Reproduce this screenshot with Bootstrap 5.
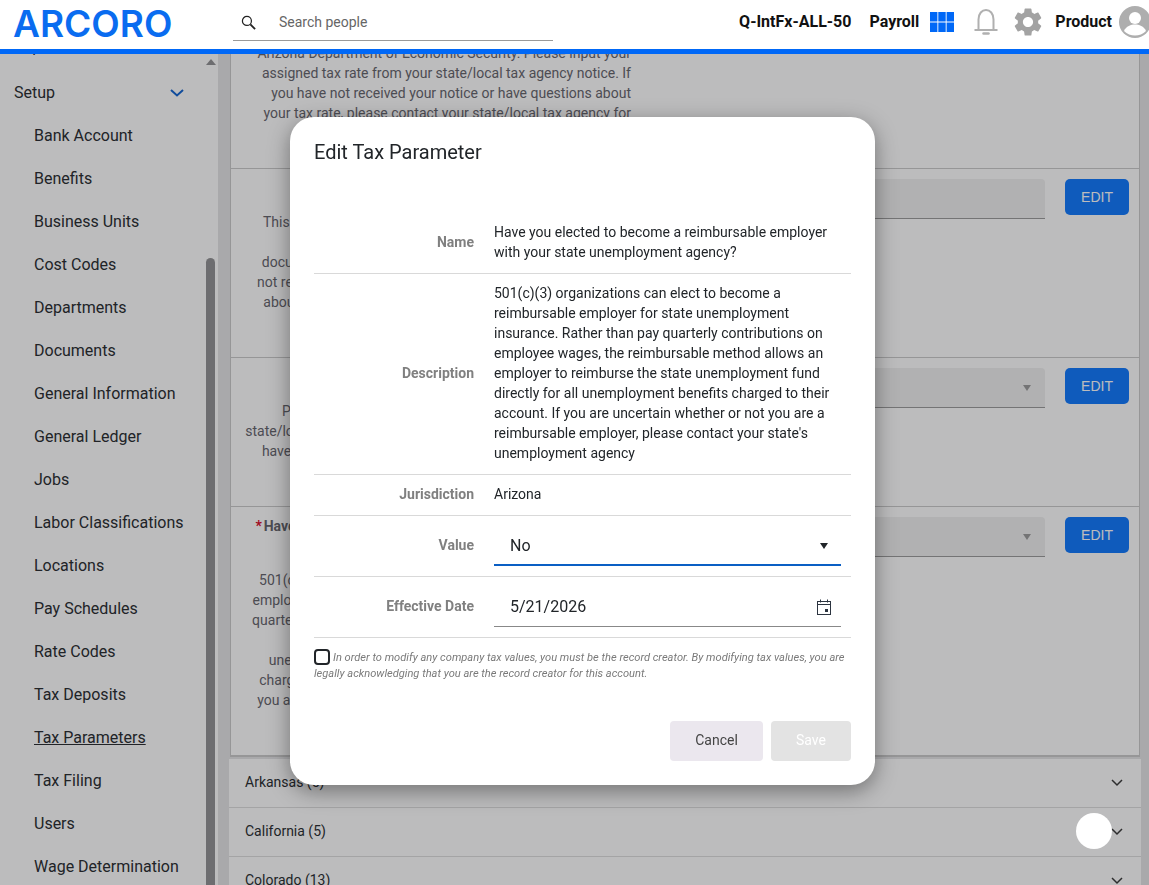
<!DOCTYPE html>
<html lang="en">
<head>
    <meta charset="UTF-8">
    <meta name="viewport" content="width=device-width, initial-scale=1.0">
    <title>Tax Parameters</title>
    <link href="https://cdn.jsdelivr.net/npm/bootstrap@5.3.0/dist/css/bootstrap.min.css" rel="stylesheet">
    <style>
        body { font-family: Roboto, "Liberation Sans", sans-serif; font-size: 14px; color: #212529; height: 100vh; overflow: hidden; background: #fff; }

        /* header */
        .top-bar { height: 54px; border-bottom: 5px solid #0068f7; background: #fff; position: relative; z-index: 1060; overflow: hidden; }
        .brand-text { font-family: Inter, sans-serif; font-size: 37px; font-weight: 600; letter-spacing: 0; color: #0a6cf0; line-height: 47px; width: 233px; padding-left: 13px; }
        .search-box { width: 320px; height: 40px; margin-top: 1px; border-bottom: 1px solid #9a9a9a; color: #666; padding: 3px 0 0 8px; gap: 23px; }
        .head-label { font-size: 16px; font-weight: 700; color: #111; line-height: 44px; }
        .tenant-label { margin-right: 18px; }
        .payroll-label { margin-right: 11px; }
        .grid-icon { margin-right: 20px; }
        .bell-icon { margin-right: 13px; }
        .gear-icon { margin-right: 10px; }
        .head-right { margin-left: auto; }
        .avatar-icon { margin: 0 -2px 0 7px; }

        /* sidebar */
        .page-wrap { height: 831px; overflow: hidden; }
        .side-nav { width: 200px; overflow: hidden; font-size: 16px; flex-shrink: 0; }
        .side-nav a { display: block; color: #212529; text-decoration: none; height: 43px; line-height: 43px; padding-left: 34px; white-space: nowrap; }
        .side-nav a.top-item { padding-left: 14px; }
        .side-nav a.clipped-item { height: 46px; }
        .side-nav a.current { text-decoration: underline; }
        .side-inner { margin-top: -29px; }
        .scroll-rail { width: 18px; flex-shrink: 0; padding: 5px 3px 0 6px; overflow: hidden; }
        .scroll-arrow { width: 0; height: 0; border-left: 5px solid transparent; border-right: 5px solid transparent; border-bottom: 6px solid #8f8f91; margin-bottom: 193px; }
        .scroll-thumb { width: 9px; height: 700px; background: #8f8f91; border-radius: 5px 5px 0 0; }

        /* background content */
        .main-area { background: #e4e4e6; flex-grow: 1; overflow: hidden; padding-left: 11px; padding-right: 8px; }
        .tax-card { background: #fff; margin: -55px 1px 2px 1px; border: 1px solid #c9c9c9; border-bottom-width: 2px; }
        .tax-row { border-bottom: 1px solid #c9c9c9; padding: 9px 10px 25px 0; }
        .tax-row:last-child { border-bottom: 0; }
        .tax-text { width: 400px; text-align: right; color: #5f6068; white-space: nowrap; line-height: 20px; flex-shrink: 0; }
        .tax-name { font-weight: 700; margin-bottom: 14px; }
        .req-star { color: #d8001c; margin-right: 2px; }
        .fake-input { background: #f0f0f0; border-bottom: 1px solid #999; height: 40px; margin: 1px 20px 0 20px; flex-grow: 1; border-radius: 4px 4px 0 0; padding-right: 14px; }
        .fake-caret { width: 0; height: 0; border-left: 4px solid transparent; border-right: 4px solid transparent; border-top: 6px solid #999; }
        .edit-btn { background: #0874fe; color: #fff; border: 0; width: 64px; height: 36px; font: 14px "Liberation Sans", sans-serif; flex-shrink: 0; margin-top: 1px; border-radius: 5px; }
        .state-row { background: #fff; height: 49px; border-bottom: 1px solid #ddd; padding: 0 18px 2px 16px; color: #212529; }
        .state-row svg { margin-top: 2px; }

        /* overlay */
        .dim-layer { position: fixed; inset: 54px 0 0 0; background: rgba(32, 32, 38, .3); z-index: 1050; }
        .tax-modal { z-index: 1055; }
        .tax-modal .modal-dialog { margin: 117px 0 0 290px; width: 585px; max-width: 585px; }
        .tax-modal .modal-content { border: 0; border-radius: 24px; box-shadow: 0 6px 22px rgba(0, 0, 0, .4); }
        .tax-modal .modal-header { border: 0; padding: 23px 24px 0; height: 96px; align-items: flex-start; }
        .tax-modal .modal-title { font-size: 20px; line-height: 24px; font-weight: 400; }
        .tax-modal .modal-body { padding: 0 24px; }
        .form-line { border-bottom: 1px solid #d9d9d9; display: flex; align-items: center; line-height: 20px; }
        .text-line { padding: 9px 0 11px; }
        .field-line { height: 61px; }
        .field-line .line-label { margin-bottom: 2px; }
        .line-label { width: 160px; margin-right: 20px; text-align: right; font-weight: 700; color: #808080; flex-shrink: 0; }
        .line-field { width: 347px; height: 40px; padding: 0 10px 0 16px; font-size: 16px; color: #212529; }
        .field-select { border-bottom: 2px solid #0a5fc4; height: 42px; margin-top: -2px; padding: 4px 13px 0 16px; }
        .field-date { border-bottom: 1px solid #888; }
        .ack-note { font-size: 11.1px; font-style: italic; color: #7a7a7a; line-height: 16px; margin-top: 10px; }
        .ack-box { appearance: none; width: 16px; height: 16px; margin: 1px 3px -3px 0; border: 2px solid #212529; border-radius: 4px; background: #fff; vertical-align: -1px; }
        .tax-modal .modal-footer { border: 0; padding: 39px 24px 24px; gap: 8px; }
        .tax-modal .modal-footer > * { margin: 0; }
        .cancel-btn, .save-btn { height: 40px; border: 0; border-radius: 4px; font-size: 14px; padding-bottom: 3px; }
        .cancel-btn { width: 93px; background: #ebe7ee; color: #444; }
        .save-btn { width: 80px; background: #e3e3e3; color: #fff; }
        .float-dot { position: fixed; left: 1076px; top: 813px; width: 36px; height: 36px; border-radius: 50%; background: #fff; z-index: 1056; }
    </style>
</head>
<body>
    <header class="top-bar d-flex align-items-start">
        <div class="brand-text">ARCORO</div>
        <div class="search-box d-flex align-items-center">
            <svg width="15" height="15" viewBox="0 0 16 16" fill="none" stroke="#222" stroke-width="1.3"><circle cx="6.3" cy="6.3" r="4.8"/><path d="M10 10l5 5" stroke-width="2"/></svg>
            <span>Search people</span>
        </div>
        <div class="head-right d-flex align-items-center">
            <span class="head-label tenant-label">Q-IntFx-ALL-50</span>
            <span class="head-label payroll-label">Payroll</span>
            <svg class="grid-icon" width="24" height="20" viewBox="0 0 24 20" fill="#0068f7" aria-label="apps"><rect width="7.4" height="9.5"/><rect x="8.3" width="7.4" height="9.5"/><rect x="16.6" width="7.4" height="9.5"/><rect y="10.500" width="7.4" height="9.5"/><rect x="8.3" y="10.500" width="7.4" height="9.5"/><rect x="16.6" y="10.500" width="7.4" height="9.5"/></svg>
            <svg class="bell-icon" width="24" height="28" viewBox="0 0 24 28" fill="none" stroke="#b0b0b0" stroke-width="2" aria-label="alerts"><path d="M.5 22h23M4.500 22V11.500C4.500 5.500 8 2 12 2s7.500 3.500 7.500 9.500V22"/><path d="M9.500 25.500h5" stroke-linecap="round" stroke-width="2.500"/></svg>
            <svg class="gear-icon" width="34" height="34" viewBox="0 0 24 24" fill="#a3a3a3" aria-label="settings"><path d="M19.140 12.940c.04-.3.06-.61.06-.94 0-.32-.02-.64-.07-.94l2.030-1.580c.18-.14.23-.41.12-.61l-1.920-3.320c-.12-.22-.37-.29-.59-.22l-2.390.96c-.5-.38-1.030-.7-1.620-.94l-.36-2.540c-.04-.24-.24-.41-.48-.41h-3.840c-.24 0-.43.17-.47.41l-.36 2.540c-.59.24-1.130.57-1.620.94l-2.390-.96c-.22-.08-.47 0-.59.22L2.740 8.870c-.12.21-.08.47.12.61l2.030 1.580c-.05.3-.09.63-.09.94s.02.64.07.94l-2.030 1.580c-.18.14-.23.41-.12.61l1.920 3.320c.12.22.37.29.59.22l2.390-.96c.5.38 1.030.7 1.620.94l.36 2.54c.05.24.24.41.48.41h3.840c.24 0 .44-.17.47-.41l.36-2.540c.59-.24 1.130-.56 1.620-.94l2.390.96c.22.08.47 0 .59-.22l1.920-3.320c.12-.22.07-.47-.12-.61l-2.010-1.580zM12 15.600c-1.980 0-3.600-1.620-3.600-3.600s1.620-3.600 3.600-3.600 3.600 1.620 3.600 3.600-1.620 3.600-3.600 3.600z"/></svg>
            <span class="head-label">Product</span>
            <svg class="avatar-icon flex-shrink-0" width="32" height="32" viewBox="0 0 32 32" aria-label="profile"><circle cx="16" cy="16" r="16" fill="#aeaeae"/><circle cx="16" cy="12" r="6" fill="#fff"/><path d="M5 25c2-5 7-6.500 11-6.500s9 1.500 11 6.500c-3 3-7 4.500-11 4.500S8 28 5 25z" fill="#fff"/></svg>
        </div>
    </header>

    <div class="page-wrap d-flex">
        <nav class="side-nav">
            <div class="side-inner">
                <a class="top-item clipped-item" href="#">Reports</a>
                <a class="top-item d-flex align-items-center justify-content-between pe-3" href="#">Setup
                    <svg width="14" height="8" viewBox="0 0 14 8" fill="none" stroke="#0a5fd0" stroke-width="2"><path d="M1 1l6 5.500L13 1"/></svg>
                </a>
                <a href="#">Bank Account</a>
                <a href="#">Benefits</a>
                <a href="#">Business Units</a>
                <a href="#">Cost Codes</a>
                <a href="#">Departments</a>
                <a href="#">Documents</a>
                <a href="#">General Information</a>
                <a href="#">General Ledger</a>
                <a href="#">Jobs</a>
                <a href="#">Labor Classifications</a>
                <a href="#">Locations</a>
                <a href="#">Pay Schedules</a>
                <a href="#">Rate Codes</a>
                <a href="#">Tax Deposits</a>
                <a class="current" href="#">Tax Parameters</a>
                <a href="#">Tax Filing</a>
                <a href="#">Users</a>
                <a href="#">Wage Determination</a>
            </div>
        </nav>
        <div class="scroll-rail">
            <div class="scroll-arrow"></div>
            <div class="scroll-thumb"></div>
        </div>
        <main class="main-area">
            <div class="tax-card">
                <div class="tax-row d-flex">
                    <div class="tax-text">
                        <div class="tax-name">&nbsp;</div>
                        Arizona Department of Economic Security. Please input your<br>
                        assigned tax rate from your state/local tax agency notice. If<br>
                        you have not received your notice or have questions about<br>
                        your tax rate, please contact your state/local tax agency for<br>
                        assistance.
                    </div>
                </div>
                <div class="tax-row d-flex align-items-start">
                    <div class="tax-text">
                        <div class="tax-name">Account Number</div>
                        This number is assigned by your state/local tax agency and<br>
                        Please input it here.<br>
                        documentation you receive from the state/local agency. If it<br>
                        not received your number or have any questions or concerns<br>
                        about your account number, please contact your agency for<br>
                        assistance.
                    </div>
                    <div class="fake-input"></div>
                    <button class="edit-btn btn" type="button">EDIT</button>
                </div>
                <div class="tax-row d-flex align-items-start">
                    <div class="tax-text">
                        <div class="tax-name">Deposit Frequency</div>
                        Please input your assigned tax deposit frequency from a<br>
                        state/local tax agency notice. If you have not yet received your<br>
                        have any questions about it, please contact your tax agency<br>
                        for assistance.
                    </div>
                    <div class="fake-input d-flex align-items-center justify-content-end"><span class="fake-caret"></span></div>
                    <button class="edit-btn btn" type="button">EDIT</button>
                </div>
                <div class="tax-row d-flex align-items-start">
                    <div class="tax-text">
                        <div class="tax-name"><span class="req-star">*</span>Have you elected to become a reimbursable employer with<br>your state unemployment agency?</div>
                        501(c)(3) organizations can elect to become a reimbursable<br>
                        employer for state unemployment insurance. Rather than pay<br>
                        quarterly contributions on employee wages, the reimbursable<br>
                        method allows an employer<br>
                        unemployment fund directly for all unemployment benefits<br>
                        charged to their account. If you are uncertain whether or not<br>
                        you are a reimbursable employer, please contact your state's<br>
                        agency
                    </div>
                    <div class="fake-input d-flex align-items-center justify-content-end"><span class="fake-caret"></span></div>
                    <button class="edit-btn btn" type="button">EDIT</button>
                </div>
            </div>
            <div class="state-row d-flex align-items-center justify-content-between">Arkansas (5)
                <svg width="12" height="8" viewBox="0 0 12 8" fill="none" stroke="#333" stroke-width="1.500"><path d="M1 1l5 5 5-5"/></svg>
            </div>
            <div class="state-row d-flex align-items-center justify-content-between">California (5)
                <svg width="12" height="8" viewBox="0 0 12 8" fill="none" stroke="#333" stroke-width="1.500"><path d="M1 1l5 5 5-5"/></svg>
            </div>
            <div class="state-row d-flex align-items-center justify-content-between">Colorado (13)
                <svg width="12" height="8" viewBox="0 0 12 8" fill="none" stroke="#333" stroke-width="1.500"><path d="M1 1l5 5 5-5"/></svg>
            </div>
        </main>
    </div>

    <div class="dim-layer"></div>
    <div class="modal d-block tax-modal" tabindex="-1">
        <div class="modal-dialog">
            <div class="modal-content">
                <div class="modal-header">
                    <h5 class="modal-title">Edit Tax Parameter</h5>
                </div>
                <div class="modal-body">
                    <div class="form-line text-line">
                        <div class="line-label">Name</div>
                        <div>Have you elected to become a reimbursable employer with your state unemployment agency?</div>
                    </div>
                    <div class="form-line text-line">
                        <div class="line-label">Description</div>
                        <div>501(c)(3) organizations can elect to become a reimbursable employer for state unemployment insurance. Rather than pay quarterly contributions on employee wages, the reimbursable method allows an employer to reimburse the state unemployment fund directly for all unemployment benefits charged to their account. If you are uncertain whether or not you are a reimbursable employer, please contact your state's unemployment agency</div>
                    </div>
                    <div class="form-line text-line">
                        <div class="line-label">Jurisdiction</div>
                        <div>Arizona</div>
                    </div>
                    <div class="form-line field-line">
                        <div class="line-label">Value</div>
                        <div class="line-field field-select d-flex align-items-center justify-content-between">No
                            <svg width="8" height="6" viewBox="0 0 8 6" fill="#212529"><path d="M0 0h8L4 6z"/></svg>
                        </div>
                    </div>
                    <div class="form-line field-line">
                        <div class="line-label">Effective Date</div>
                        <div class="line-field field-date d-flex align-items-center justify-content-between">5/21/2026
                            <svg width="14" height="16" viewBox="0 0 14 16" fill="none" stroke="#2c3440" aria-label="calendar"><rect x=".5" y="2.500" width="13" height="13"/><path d="M.5 5.500h13M3.500 .5v3M10.500 .5v3"/><rect x="8" y="10" width="3" height="3" fill="#2c3440" stroke="none"/></svg>
                        </div>
                    </div>
                    <div class="ack-note"><input class="ack-box" type="checkbox" aria-label="Acknowledge">In order to modify any company tax values, you must be the record creator. By modifying tax values, you are legally acknowledging that you are the record creator for this account.</div>
                </div>
                <div class="modal-footer">
                    <button class="cancel-btn" type="button">Cancel</button>
                    <button class="save-btn" type="button" disabled>Save</button>
                </div>
            </div>
        </div>
    </div>
    <div class="float-dot"></div>

    <script src="https://cdn.jsdelivr.net/npm/bootstrap@5.3.0/dist/js/bootstrap.bundle.min.js"></script>
</body>
</html>
